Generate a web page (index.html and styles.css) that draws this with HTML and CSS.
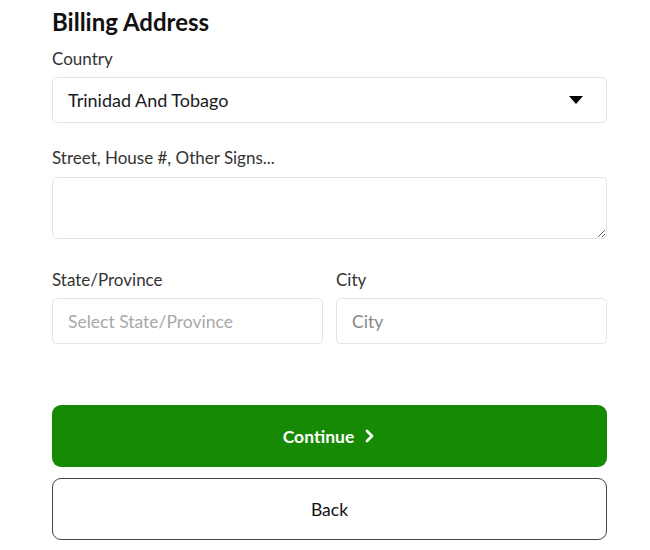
FILE: index.html
```html
<!DOCTYPE html>
<html>
<head>
<meta charset="utf-8">
<link rel="stylesheet" href="styles.css">
</head>
<body>
<main class="form">
  <h2 class="title">Billing Address</h2>
  <label class="label">Country</label>
  <div class="select">
    <span>Trinidad And Tobago</span>
    <svg class="caret" width="16" height="10" viewBox="0 0 16 10"><path d="M1 1h14L8 9z" fill="#000"/></svg>
  </div>
  <label class="label label-gap">Street, House #, Other Signs...</label>
  <textarea class="textarea"></textarea>
  <div class="row">
    <div class="col">
      <label class="label">State/Province</label>
      <div class="input placeholder">Select State/Province</div>
    </div>
    <div class="col">
      <label class="label">City</label>
      <div class="input placeholder city">City</div>
    </div>
  </div>
  <button class="btn btn-primary">Continue
    <svg width="12" height="14" viewBox="0 0 12 14"><path d="M3 2l5 5-5 5" fill="none" stroke="#fff" stroke-width="2.8" stroke-linecap="round" stroke-linejoin="round"/></svg>
  </button>
  <button class="btn btn-outline">Back</button>
</main>
</body>
</html>
```
FILE: styles.css
```css
* { box-sizing: border-box; }
body {
  margin: 0;
  background: #fff;
  font-family: Lato, "Noto Sans", sans-serif;
  color: #222;
}
.form {
  width: 555px;
  margin-left: 52px;
  display: flex;
  flex-direction: column;
}
.title {
  margin: 8px 0 0;
  font-size: 24px;
  font-weight: 700;
  color: #111;
  line-height: 28px;
}
.label {
  display: block;
  font-size: 17px;
  color: #333;
  line-height: 20px;
  margin-top: 13px;
  margin-bottom: 8px;
}
.label-gap { margin-top: 25px; }
.select {
  height: 46px;
  border: 1px solid #e4e4e4;
  border-radius: 5px;
  display: flex;
  align-items: center;
  justify-content: space-between;
  padding: 0 22px 0 15px;
  font-size: 18px;
  color: #1a1a1a;
}
.textarea {
  display: block;
  height: 62px;
  margin-top: 1px;
  border: 1px solid #e4e4e4;
  border-radius: 5px;
  resize: vertical;
  width: 100%;
  font-family: inherit;
}
.row {
  display: flex;
  gap: 13px;
  margin-top: 31px;
}
.row .label { margin-top: 0; }
.col { flex: 1; }
.input {
  height: 46px;
  border: 1px solid #e4e4e4;
  border-radius: 5px;
  display: flex;
  align-items: center;
  padding: 0 15px;
  font-size: 17.5px;
}
.placeholder { color: #a8a8a8; }
.city { color: #888; }
.btn {
  height: 62px;
  border-radius: 9px;
  font-family: inherit;
  font-size: 17.5px;
  display: flex;
  align-items: center;
  justify-content: center;
  gap: 10px;
  width: 100%;
}
.btn-primary {
  margin-top: 61px;
  background: #178a05;
  border: none;
  color: #fff;
  font-weight: 700;
}
.btn-outline {
  margin-top: 11px;
  background: #fff;
  border: 1.5px solid #444;
  color: #111;
}
```
